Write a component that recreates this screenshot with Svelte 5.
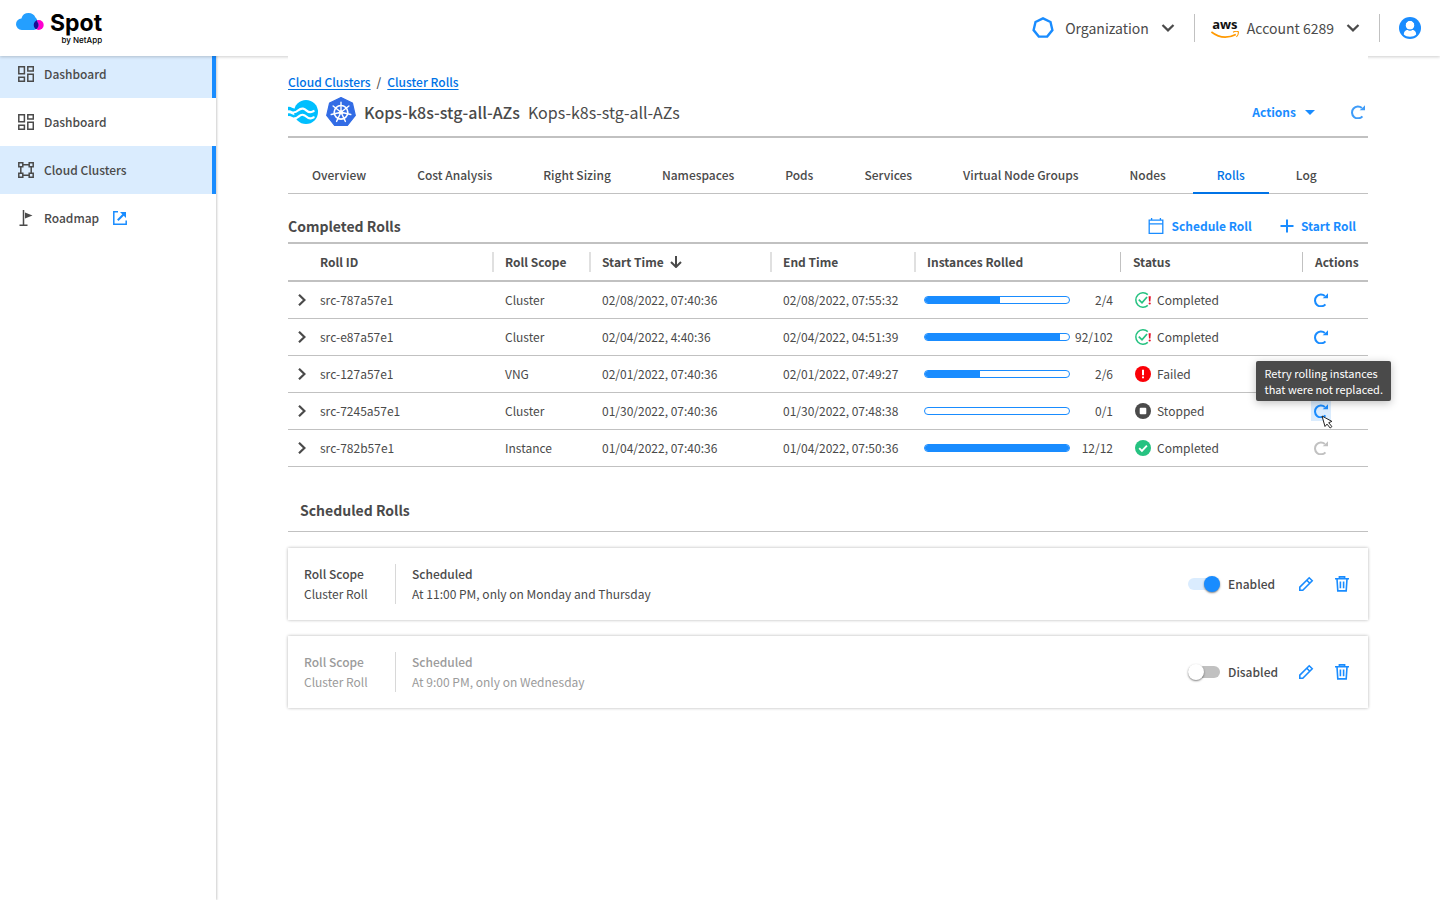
<script>
  const navItems = [
    { label: 'Dashboard', icon: 'dashboard', active: true },
    { label: 'Dashboard', icon: 'dashboard', active: false },
    { label: 'Cloud Clusters', icon: 'clusters', active: true },
    { label: 'Roadmap', icon: 'flag', active: false, external: true },
  ];

  const tabs = [
    'Overview', 'Cost Analysis', 'Right Sizing', 'Namespaces', 'Pods',
    'Services', 'Virtual Node Groups', 'Nodes', 'Rolls', 'Log',
  ];
  let activeTab = $state('Rolls');

  const rolls = [
    { id: 'src-787a57e1', scope: 'Cluster', start: '02/08/2022, 07:40:36', end: '02/08/2022, 07:55:32', fill: 52, count: '2/4', status: 'Completed', icon: 'partial' },
    { id: 'src-e87a57e1', scope: 'Cluster', start: '02/04/2022, 4:40:36', end: '02/04/2022, 04:51:39', fill: 94, count: '92/102', status: 'Completed', icon: 'partial' },
    { id: 'src-127a57e1', scope: 'VNG', start: '02/01/2022, 07:40:36', end: '02/01/2022, 07:49:27', fill: 38, count: '2/6', status: 'Failed', icon: 'failed' },
    { id: 'src-7245a57e1', scope: 'Cluster', start: '01/30/2022, 07:40:36', end: '01/30/2022, 07:48:38', fill: 0, count: '0/1', status: 'Stopped', icon: 'stopped', hovered: true },
    { id: 'src-782b57e1', scope: 'Instance', start: '01/04/2022, 07:40:36', end: '01/04/2022, 07:50:36', fill: 100, count: '12/12', status: 'Completed', icon: 'done', locked: true },
  ];

  let schedules = $state([
    { scope: 'Cluster Roll', when: 'At 11:00 PM, only on Monday and Thursday', enabled: true },
    { scope: 'Cluster Roll', when: 'At 9:00 PM, only on Wednesday', enabled: false },
  ]);
</script>

{#snippet chevronDown()}
  <svg width="14" height="8" viewBox="0 0 14 8" fill="none" stroke="#4a4a4a" stroke-width="2.2">
    <path d="M1.500 1L7 6.400 12.500 1" />
  </svg>
{/snippet}

{#snippet retryIcon()}
  <svg width="14" height="14" viewBox="0 0 14 14">
    <path d="M10.9 3.1A5.9 5.9 0 1 0 11.4 11.3" fill="none" stroke="currentColor" stroke-width="2" />
    <path d="M14 .2v5H8.6L11 3.2z" fill="currentColor" />
  </svg>
{/snippet}

{#snippet statusIcon(name)}
  <svg width="16" height="16" viewBox="0 0 16 16">
    {#if name === 'partial'}
      <path d="M12.800 2.600A7.200 7.200 0 1 0 12.800 13.400" fill="none" stroke="#26c281" stroke-width="1.500" />
      <path d="M3.800 7.600l3.200 3.200 5-5.800" fill="none" stroke="#26c281" stroke-width="1.700" />
      <path d="M13.600 4.200h2.200l-.4 5.200h-1.400z" fill="#e8112d" />
      <circle cx="14.700" cy="11.500" r="1.100" fill="#e8112d" />
    {:else if name === 'failed'}
      <circle cx="8" cy="8" r="8" fill="#fb0007" />
      <path d="M7 3.800h2v5.400H7zM7 10.400h2v1.900H7z" fill="#fff" />
    {:else if name === 'stopped'}
      <circle cx="8" cy="8" r="8" fill="#4a4a4a" />
      <rect x="4.700" y="4.700" width="6.600" height="6.600" rx="1" fill="#fff" />
    {:else}
      <circle cx="8" cy="8" r="8" fill="#26c281" />
      <path d="M4.200 8.200l2.700 2.700 5-5.200" fill="none" stroke="#fff" stroke-width="1.900" />
    {/if}
  </svg>
{/snippet}

<header class="topbar">
  <a class="brand" href="#home" aria-label="Spot by NetApp">
    <svg class="cloud" width="28" height="18" viewBox="0 0 28 18">
      <defs>
        <clipPath id="cloud-shape">
          <circle cx="5.700" cy="11.200" r="5.700" />
          <circle cx="12.600" cy="7.600" r="7.500" />
          <circle cx="17.600" cy="12" r="4.900" />
          <circle cx="17" cy="8" r="4.200" />
          <rect x="5.700" y="8" width="12" height="8.900" />
        </clipPath>
      </defs>
      <circle cx="22.700" cy="12" r="5" fill="#ff00d0" />
      <g clip-path="url(#cloud-shape)">
        <rect width="28" height="18" fill="#249fff" />
        <circle cx="22.700" cy="12" r="5" fill="#1c0d94" />
      </g>
    </svg>
    <span class="wordmark">
      <span class="spot">Spot</span>
      <span class="netapp">by NetApp</span>
    </span>
  </a>

  <div class="account">
    <button class="picker">
      <svg width="24" height="24" viewBox="0 0 24 24">
        <path d="M12 2.400l7.500 3.600 1.900 8.100-5.200 6.500H7.800l-5.200-6.500L4.500 6z" fill="none" stroke="#198cff" stroke-width="2.400" />
      </svg>
      <span class="org">Organization</span>
      {@render chevronDown()}
    </button>
    <span class="separator"></span>
    <button class="picker">
      <span class="aws">
        <span>aws</span>
        <svg width="28" height="8" viewBox="0 0 28 8">
          <path d="M.4 1c7.500 5.800 16.500 6.400 24.400 2.400" fill="none" stroke="#f90" stroke-width="1.700" />
          <path d="M22 1.200c2-1 4-1.100 5.300-.5.300 1.800-.4 3.800-1.900 5.200" fill="none" stroke="#f90" stroke-width="1.100" />
        </svg>
      </span>
      <span class="acct">Account 6289</span>
      {@render chevronDown()}
    </button>
    <span class="separator"></span>
    <button class="user" aria-label="User menu">
      <svg width="22" height="22" viewBox="0 0 22 22">
        <circle cx="11" cy="11" r="11" fill="#198cff" />
        <circle cx="11" cy="8.200" r="4.500" fill="#fff" />
        <path d="M4.800 17.600c0-2.600 1.200-4.200 3.400-4.800 1.800 1 3.800 1 5.600 0 2.200.6 3.400 2.200 3.400 4.800-1.600 1.600-3.600 2.200-6.200 2.200s-4.600-.6-6.200-2.200z" fill="#fff" />
        <circle cx="11" cy="8.200" r="4.900" fill="none" stroke="#198cff" />
      </svg>
    </button>
  </div>
</header>

<div class="layout">
  <nav class="sidebar">
    {#each navItems as item}
      <a href="#nav" class="nav-item" class:active={item.active}>
        <svg width="16" height="16" viewBox="0 0 16 16" fill="none" stroke="#4a4a4a" stroke-width="1.500">
          {#if item.icon === 'dashboard'}
            <path d="M.8.8h5.600v7H.8zM9.800.8h5.500v4.200H9.800zM.8 11.200h5.600v4.100H.8zM9.800 8.200h5.500v7.100H9.800z" />
          {:else if item.icon === 'clusters'}
            <path d="M.8.8h4v4h-4zM11.200.8h4v4h-4zM.8 11.200h4v4h-4zM11.200 11.200h4v4h-4zM4.800 2.800h6.400M4.800 13.200h6.400M2.800 4.800v6.400M13.200 4.800v6.400" />
          {:else}
            <path d="M5.500 0v15.500M1.500 15.300h8" />
            <path d="M7 2.500l7.500 3L7 8.500z" fill="#4a4a4a" stroke="none" />
          {/if}
        </svg>
        <span>{item.label}</span>
        {#if item.external}
          <svg class="external" width="14" height="14" viewBox="0 0 14 14" fill="none" stroke="#198cff">
            <path d="M5 .8H.8v12.400h12.400V9.500" stroke-width="1.500" />
            <path d="M4.800 9.200l6-6" stroke-width="2" />
            <path d="M7 1h6v6z" fill="#198cff" stroke="none" />
          </svg>
        {/if}
      </a>
    {/each}
  </nav>

  <main>
    <div class="content">
      <div class="breadcrumbs">
        <a href="#clusters">Cloud Clusters</a>
        <span>/</span>
        <a href="#rolls">Cluster Rolls</a>
      </div>

      <div class="title-row">
        <svg width="30" height="26" viewBox="0 0 30 26">
          <circle cx="18" cy="13" r="12" fill="#00bfff" />
          <path d="M0 8c3-.8 5 2.400 8 1.600V13c-3 .6-5-2.400-8-1.600zM0 14.400c3-.8 5 2.400 8 1.600v2.800c-3 .6-5-2.400-8-1.600z" fill="#00bfff" />
          <path d="M5.500 13.200c4 .8 5-4.400 9.500-3.600 3.600.6 4 4 7.500 3.600 1.500-.2 2.500-1 4-1.400M6 19.400c4 .8 5-4.400 9-3.600 3.600.6 4 4 7.500 3.600 1.500-.2 2.500-1 4-1.400" fill="none" stroke="#fff" stroke-width="2.200" />
        </svg>
        <svg class="kube" width="30" height="30" viewBox="0 0 30 30">
          <path d="M15 .6l11.400 5.400 2.900 12.400-7.900 10.100H8.600L.7 18.400 3.600 6z" fill="#326ce5" stroke="#326ce5" stroke-width="1.200" stroke-linejoin="round" />
          <circle cx="15" cy="15.300" r="6.800" fill="none" stroke="#fff" stroke-width="1.700" />
          <circle cx="15" cy="15.300" r="2" fill="#fff" />
          <path
            d="M15 15.300V5.200M15 15.300l7.900-6.300M15 15.300l9.800 2.200M15 15.300l4.400 9.100M15 15.300l-4.400 9.100M15 15.300L5.200 17.500M15 15.300L7.100 9"
            stroke="#fff" stroke-width="1.400" stroke-linecap="round"
          />
        </svg>
        <h1>Kops-k8s-stg-all-AZs</h1>
        <span class="subtitle">Kops-k8s-stg-all-AZs</span>
        <button class="link-button menu">
          Actions
          <svg width="10" height="5" viewBox="0 0 10 5"><path d="M0 0h10L5 5z" fill="currentColor" /></svg>
        </button>
        <button class="refresh" aria-label="Refresh">{@render retryIcon()}</button>
      </div>

      <div class="tabs" role="tablist">
        {#each tabs as tab}
          <button
            role="tab"
            class:selected={tab === activeTab}
            aria-selected={tab === activeTab}
            onclick={() => (activeTab = tab)}
          >{tab}</button>
        {/each}
      </div>

      <div class="section-head">
        <h2>Completed Rolls</h2>
        <div class="section-actions">
          <button class="link-button">
            <svg width="16" height="16" viewBox="0 0 16 16" fill="none" stroke="currentColor" stroke-width="1.300">
              <path d="M1.200 2.200h13.600v13.100H1.200zM1.200 5.800h13.600M3.600 0v2.200M12.400 0v2.200" />
            </svg>
            Schedule Roll
          </button>
          <button class="link-button">
            <svg width="14" height="14" viewBox="0 0 14 14" stroke="currentColor" stroke-width="2">
              <path d="M7 .5v13M.5 7h13" />
            </svg>
            Start Roll
          </button>
        </div>
      </div>

      <table>
        <thead>
          <tr>
            <th class="col-expand" aria-label="Expand"></th>
            <th class="col-id">Roll ID</th>
            <th class="col-scope"><span>Roll Scope</span></th>
            <th class="col-start">
              <span>
                Start Time
                <svg width="12" height="12" viewBox="0 0 12 12" fill="none" stroke="#4a4a4a" stroke-width="2">
                  <path d="M6 0v11M1 6l5 5 5-5" />
                </svg>
              </span>
            </th>
            <th class="col-end"><span>End Time</span></th>
            <th class="col-instances"><span>Instances Rolled</span></th>
            <th class="col-status"><span>Status</span></th>
            <th class="col-actions"><span>Actions</span></th>
          </tr>
        </thead>
        <tbody>
          {#each rolls as roll}
            <tr>
              <td>
                <button class="expand" aria-label="Expand {roll.id}">
                  <svg width="8" height="12" viewBox="0 0 8 12" fill="none" stroke="#4a4a4a" stroke-width="2.200">
                    <path d="M1 .800L6.400 6 1 11.200" />
                  </svg>
                </button>
              </td>
              <td>{roll.id}</td>
              <td class="inset">{roll.scope}</td>
              <td class="inset">{roll.start}</td>
              <td class="inset">{roll.end}</td>
              <td>
                <div class="instances">
                  <div class="bar" role="progressbar" aria-label="Instances rolled" aria-valuenow={roll.fill}>
                    <div class="fill" style="width: {roll.fill}%"></div>
                  </div>
                  <span class="count">{roll.count}</span>
                </div>
              </td>
              <td>
                <div class="status">
                  {@render statusIcon(roll.icon)}
                  <span>{roll.status}</span>
                </div>
              </td>
              <td>
                <div class="retry-wrap">
                  <button class="retry" class:hovered={roll.hovered} disabled={roll.locked} aria-label="Retry {roll.id}">
                    {@render retryIcon()}
                  </button>
                  {#if roll.hovered}
                    <div class="tooltip" role="tooltip">Retry rolling instances<br />that were not replaced.</div>
                    <svg class="cursor" width="12" height="14" viewBox="0 0 12 14">
                      <path d="M1 1l3 10.500 2-2.400 3.200 3.900 1.700-1.400-3.200-3.900 3.200-1.300z" fill="#fff" stroke="#222" />
                    </svg>
                  {/if}
                </div>
              </td>
            </tr>
          {/each}
        </tbody>
      </table>

      <h2 class="scheduled-title">Scheduled Rolls</h2>

      <div class="cards">
        {#each schedules as schedule, i}
          <section class="card" class:off={!schedule.enabled}>
            <div class="scope">
              <strong>Roll Scope</strong>
              <span>{schedule.scope}</span>
            </div>
            <div class="when">
              <strong>Scheduled</strong>
              <span>{schedule.when}</span>
            </div>
            <label class="toggle" for="toggle-{i}">
              <input id="toggle-{i}" type="checkbox" role="switch" bind:checked={schedule.enabled} />
              {schedule.enabled ? 'Enabled' : 'Disabled'}
            </label>
            <button class="icon-button" aria-label="Edit">
              <svg width="16" height="16" viewBox="0 0 16 16" fill="none" stroke="#198cff" stroke-width="1.600">
                <path d="M1.800 14.200v-3L11.200 1.800l3 3-9.400 9.400zM8.800 4.200l3 3" />
              </svg>
            </button>
            <button class="icon-button" aria-label="Delete">
              <svg width="14" height="16" viewBox="0 0 14 16" fill="none" stroke="#198cff" stroke-width="1.600">
                <path d="M0 2.800h14M4.400 2.600V.9h5.200v1.700M2 3l.8 11.900h8.400L12 3M5.400 5.600v6.600M8.600 5.600v6.600" />
              </svg>
            </button>
          </section>
        {/each}
      </div>
    </div>
  </main>
</div>

<style>
  :global(body) {
    background: #fff;
    color: #4a4a4a;
    font-family: 'Noto Sans CJK SC', 'Noto Sans', sans-serif;
    font-size: 12px;
    line-height: 20px;
  }

  button {
    display: flex;
    align-items: center;
    padding: 0;
    border: 0;
    background: none;
    color: inherit;
    font: inherit;
    cursor: pointer;
  }

  svg {
    display: block;
    flex: none;
  }

  h1,
  h2 {
    margin: 0;
  }

  .topbar {
    position: relative;
    z-index: 1;
    display: flex;
    align-items: center;
    justify-content: space-between;
    height: 56px;
    padding: 0 19px 0 16px;
    box-sizing: border-box;
    background: #fff;
    box-shadow: 0 1px 3px rgba(0, 0, 0, 0.2);
  }

  .brand {
    display: flex;
    gap: 6px;
    color: #000;
    font-family: Inter, sans-serif;
    text-decoration: none;
  }

  .wordmark {
    display: flex;
    flex-direction: column;
    align-items: flex-end;
    gap: 3px;
  }

  .spot {
    font-size: 23px;
    font-weight: 700;
    line-height: 20px;
  }

  .netapp {
    font-size: 8px;
    font-weight: 500;
    line-height: 8px;
  }

  .account {
    display: flex;
    align-items: center;
    font-size: 14px;
  }

  .org {
    margin: 0 12px 0 10px;
  }

  .acct {
    margin: 0 12px 0 8px;
  }

  .aws {
    display: flex;
    flex-direction: column;
    align-items: center;
    color: #111;
    font-family: 'Open Sans', sans-serif;
    font-size: 13px;
    font-weight: 700;
    line-height: 13px;
  }

  .separator {
    width: 1px;
    height: 28px;
    margin: 0 16px 0 19px;
    background: #c1c1c1;
  }

  .user {
    margin-left: 3px;
  }

  .layout {
    display: flex;
    min-height: calc(100vh - 56px);
  }

  .sidebar {
    flex: 0 0 216px;
    margin-top: -6px;
    box-shadow: 1px 0 2px rgba(0, 0, 0, 0.2);
  }

  .nav-item {
    display: flex;
    align-items: center;
    gap: 10px;
    height: 48px;
    padding-left: 18px;
    box-sizing: border-box;
    color: #4a4a4a;
    font-weight: 500;
    text-decoration: none;
  }

  .nav-item.active {
    border-right: 4px solid #198cff;
    background: #daecfe;
  }

  .external {
    margin-left: 4px;
  }

  main {
    flex: 1;
    min-width: 0;
    padding: 0 72px;
  }

  .content {
    position: relative;
    z-index: 2;
    padding-top: 16px;
    background: #fff;
  }

  .breadcrumbs {
    display: flex;
    gap: 6px;
    font-weight: 500;
  }

  .breadcrumbs a {
    color: #0073e6;
    text-underline-offset: 2px;
  }

  .title-row {
    display: flex;
    align-items: center;
    height: 40px;
    padding-bottom: 4px;
    border-bottom: 2px solid #c1c1c1;
  }

  .kube {
    margin: 0 8px;
  }

  h1 {
    font-size: 16px;
    font-weight: 500;
  }

  .subtitle {
    margin-left: 8px;
    font-size: 16px;
  }

  .link-button {
    gap: 7px;
    color: #198cff;
    font-weight: 700;
  }

  .menu {
    gap: 9px;
    margin-left: auto;
  }

  .refresh {
    margin: 0 3px 0 36px;
    color: #3f9cf8;
  }

  .tabs {
    display: flex;
    gap: 3px;
    height: 38px;
    margin-top: 18px;
    box-shadow: inset 0 -1px #c1c1c1;
  }

  .tabs button {
    padding: 0 24px;
    font-weight: 500;
  }

  .tabs .selected {
    box-shadow: inset 0 -2px #0073e6;
    color: #0073e6;
  }

  .section-head {
    display: flex;
    align-items: center;
    justify-content: space-between;
    height: 32px;
    margin-top: 16px;
    padding-right: 12px;
    border-bottom: 2px solid #c1c1c1;
  }

  h2 {
    font-size: 14px;
    font-weight: 700;
  }

  .section-actions {
    display: flex;
    gap: 28px;
  }

  table {
    width: 100%;
    border-collapse: separate;
    border-spacing: 0;
    table-layout: fixed;
  }

  th {
    height: 36px;
    padding: 0;
    border-bottom: 2px solid #c1c1c1;
    text-align: left;
    white-space: nowrap;
  }

  th span {
    display: flex;
    align-items: center;
    gap: 6px;
    padding-left: 11px;
    border-left: 2px solid #e0e0e0;
  }

  .col-expand { width: 32px; }
  .col-id { width: 172px; }
  .col-scope { width: 97px; }
  .col-start { width: 181px; }
  .col-end { width: 144px; }
  .col-instances { width: 206px; }
  .col-status { width: 182px; }
  .col-actions { width: 66px; }

  .col-status span,
  .col-actions span {
    padding-left: 12px;
    border-left: 1px solid #c1c1c1;
  }

  td {
    height: 36px;
    padding: 0;
    border-bottom: 1px solid #c1c1c1;
    white-space: nowrap;
  }

  .inset {
    padding-left: 13px;
  }

  .expand {
    padding: 4px 10px;
  }

  .instances {
    display: flex;
    align-items: center;
    padding: 0 7px 0 10px;
  }

  .bar {
    flex: 1;
    height: 6px;
    overflow: hidden;
    border: 1px solid #198cff;
    border-radius: 4px;
  }

  .fill {
    height: 100%;
    background: #198cff;
  }

  .count {
    min-width: 43px;
    text-align: right;
  }

  .status {
    display: flex;
    align-items: center;
    gap: 6px;
    padding-left: 15px;
  }

  .retry-wrap {
    position: relative;
    width: 20px;
    margin-left: 9px;
  }

  .retry {
    justify-content: center;
    width: 20px;
    height: 20px;
    color: #198cff;
  }

  .retry.hovered {
    background: #daecfe;
  }

  .retry:disabled {
    color: #c1c1c1;
  }

  .tooltip {
    position: absolute;
    right: -60px;
    bottom: 20px;
    padding: 4px 8px;
    border-radius: 2px;
    background: #4a4a4a;
    box-shadow: 0 2px 8px rgba(0, 0, 0, 0.25);
    color: #fff;
    font-size: 11px;
    line-height: 16px;
  }

  .cursor {
    position: absolute;
    top: 14px;
    left: 10px;
  }

  .scheduled-title {
    margin-top: 22px;
    padding: 11px 12px;
    border-bottom: 1px solid #c1c1c1;
  }

  .cards {
    display: flex;
    flex-direction: column;
    gap: 16px;
    margin-top: 16px;
  }

  .card {
    display: flex;
    align-items: center;
    padding: 16px;
    box-shadow: 0 0 3px rgba(0, 0, 0, 0.3);
  }

  .scope,
  .when {
    display: flex;
    flex-direction: column;
  }

  .scope {
    width: 91px;
    border-right: 1px solid #d8d8d8;
  }

  .when {
    flex: 1;
    padding-left: 16px;
  }

  strong {
    font-weight: 500;
  }

  .off .scope,
  .off .when {
    color: #9b9b9b;
  }

  .toggle {
    display: flex;
    align-items: center;
    gap: 8px;
    width: 108px;
    font-weight: 500;
  }

  .toggle input {
    position: relative;
    width: 32px;
    height: 12px;
    margin: 0;
    border-radius: 6px;
    background: #c1c1c1;
    appearance: none;
  }

  .toggle input::before {
    content: '';
    position: absolute;
    top: -2px;
    left: 0;
    width: 16px;
    height: 16px;
    border-radius: 50%;
    background: #fff;
    box-shadow: 0 1px 2px rgba(0, 0, 0, 0.5);
  }

  .toggle input:checked {
    background: #daecfe;
  }

  .toggle input:checked::before {
    left: 16px;
    background: #198cff;
  }

  .icon-button {
    justify-content: center;
    width: 20px;
    height: 20px;
  }

  .icon-button + .icon-button {
    margin-left: 16px;
  }
</style>
